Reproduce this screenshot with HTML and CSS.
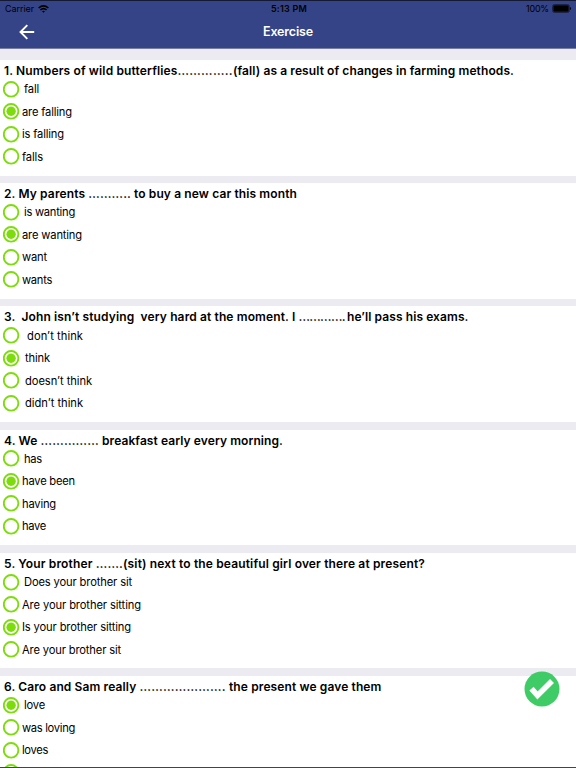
FILE: index.html
```html
<!DOCTYPE html>
<html lang="en">
<head>
<meta charset="utf-8">
<title>Exercise</title>
<link rel="stylesheet" href="styles.css">
</head>
<body>
<header class="top">
  <div class="status">
    <div class="carrier"><span class="fit" data-w="29">Carrier</span>
      <svg width="11" height="8" viewBox="0 0 11 8" fill="none" stroke="#000" stroke-width="1.5"><path d="M.6 3Q5.5-1.3 10.4 3M2.4 4.9Q5.5 2.3 8.6 4.9"/><path d="M4 6.2Q5.5 5.2 7 6.2L5.5 7.8Z" fill="#000" stroke="none"/></svg>
    </div>
    <div class="time"><span class="fit" data-w="36">5:13 PM</span></div>
    <div class="power"><span class="fit" data-w="23">100%</span>
      <svg width="19" height="9" viewBox="0 0 19 9"><rect x=".5" y=".5" width="17" height="8" rx="2" fill="none" stroke="#1b234a"/><rect x="1.3" y="1.3" width="15.4" height="6.4" rx=".8"/><path d="M18 3q1 .4 1 1.5t-1 1.5z"/></svg>
    </div>
  </div>
  <nav class="nav">
    <svg class="back" width="16" height="16" viewBox="0 0 16 16" fill="none" stroke="#fff" stroke-width="1.9"><path d="M15.2 8H2M8.3 1.2L1.5 8l6.8 6.8"/></svg>
    <h1><span class="fit" data-w="50">Exercise</span></h1>
  </nav>
</header>
<main id="list"></main>
<button class="done" aria-label="Submit"><svg width="36" height="36" viewBox="0 0 36 36"><circle cx="18" cy="18" r="17.5" fill="#3fcb66"/><path d="M7.5 17.7l6 6.8L28 10" fill="none" stroke="#fff" stroke-width="5.6"/></svg></button>
<script src="app.js"></script>
</body>
</html>
```
FILE: styles.css
```css
* { box-sizing: border-box; }
body { margin: 0; height: 768px; overflow: hidden; background: #ebebf1; border-bottom: 1px solid #444; color: #000; font-family: Inter, "Liberation Sans", sans-serif; }
.top { height: 49px; background: #354486; border-top: 1px solid #141a35; border-bottom: 1px solid #777da3; }
.status { display: grid; grid-template-columns: 1fr 1fr 1fr; height: 15px; align-items: center; padding: 0 5px; font-size: 9px; line-height: 15px; }
.status div { display: flex; align-items: center; gap: 4px; }
.status .time { justify-content: center; padding-left: 2px; font-weight: 600; }
.status .power { justify-content: flex-end; gap: 3px; }
.nav { display: grid; grid-template-columns: 1fr auto 1fr; height: 32px; align-items: center; color: #fff; }
.back { margin-left: 19px; }
h1 { margin: 0; font-size: 12.5px; font-weight: 600; line-height: 16px; }
.fit { white-space: pre; }
main { height: 718px; padding-top: 11px; overflow: hidden; }
.card { height: 115.5px; margin-bottom: 7.7px; padding: 2px 0 0 3px; background: #fff; }
h2 { display: flex; margin: 0 0 0 1px; height: 16px; font-size: 12px; line-height: 18px; font-weight: 600; }
.option { display: flex; align-items: center; height: 22.5px; font-size: 11.2px; }
.option svg { flex: none; margin-right: 2px; }
.option.first .fit { margin-left: 2px; }
.option.indent .fit { margin-left: 3px; }
.option.first.indent .fit { margin-left: 5px; }
.done { position: absolute; left: 524px; top: 671px; width: 36px; height: 36px; padding: 0; border: 0; background: none; }
.done svg { display: block; }
```
FILE: app.js
```js
const questions = [
  [[["1. Numbers of wild butterflies", 173.5], ["…………..", 55.5], ["(fall) as a result of changes in farming methods.", 281]], 1, [["fall", 15], ["are falling", 50], ["is falling", 42], ["falls", 21]]],
  [[["2. My parents ……….. ", 130], ["to buy a new car this month", 163]], 1, [["is wanting", 51], ["are wanting", 60], ["want", 25], ["wants", 30]]],
  [[["3.  John isn’t studying  very hard at the moment. I ", 294.5], ["…………. ", 48.5], ["he’ll pass his exams.", 121.5]], 1, [["don’t think", 56], ["think", 25], ["doesn’t think", 67], ["didn’t think", 58]], true],
  [[["4. We ", 36.5], ["…………… ", 61.5], ["breakfast early every morning.", 181]], 1, [["has", 18], ["have been", 53], ["having", 34], ["have", 24]]],
  [[["5. Your brother …….", 119], ["(sit) next to the beautiful girl over there at present?", 302]], 2, [["Does your brother sit", 108], ["Are your brother sitting", 119], ["Is your brother sitting", 109], ["Are your brother sit", 99]]],
  [[["6. Caro and Sam really ", 135.5], ["…………………. ", 89.5], ["the present we gave them", 152.5]], 0, [["love", 21], ["was loving", 53], ["loves", 26], ["", 0]]]
];
const label = ([text, width]) => text ? `<span class="fit" data-w="${width}">${text}</span>` : "";
const radio = on => `<svg width="17" height="17" viewBox="0 0 17 17"><circle cx="8.1" cy="8.3" r="7.3" fill="none" stroke="#7ddc0b" stroke-width="1.9"/>${on ? '<circle cx="8.1" cy="8.3" r="4.7" fill="#7ddc0b"/>' : ""}</svg>`;
document.getElementById("list").innerHTML = questions.map(([title, selected, options, indent]) =>
  `<section class="card"><h2>${title.map(label).join("")}</h2>${options.map((option, i) =>
    `<div class="option${i ? "" : " first"}${indent ? " indent" : ""}">${radio(i === selected)}${label(option)}</div>`).join("")}</section>`).join("");
// Track each label so its line keeps the intended measure.
document.querySelectorAll(".fit").forEach(el => {
  const extra = (el.dataset.w - el.getBoundingClientRect().width) / el.textContent.length;
  el.style.letterSpacing = extra + "px";
});
```
